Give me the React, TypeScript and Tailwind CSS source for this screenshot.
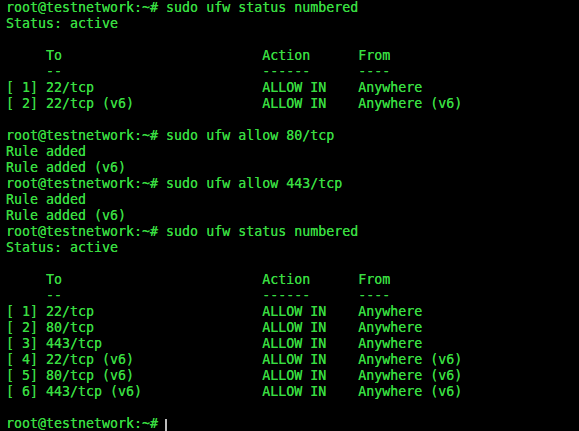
import React from "react";

const lines: string[] = [
  "root@testnetwork:~# sudo ufw status numbered",
  "Status: active",
  "",
  "     To                         Action      From",
  "     --                         ------      ----",
  "[ 1] 22/tcp                     ALLOW IN    Anywhere",
  "[ 2] 22/tcp (v6)                ALLOW IN    Anywhere (v6)",
  "",
  "root@testnetwork:~# sudo ufw allow 80/tcp",
  "Rule added",
  "Rule added (v6)",
  "root@testnetwork:~# sudo ufw allow 443/tcp",
  "Rule added",
  "Rule added (v6)",
  "root@testnetwork:~# sudo ufw status numbered",
  "Status: active",
  "",
  "     To                         Action      From",
  "     --                         ------      ----",
  "[ 1] 22/tcp                     ALLOW IN    Anywhere",
  "[ 2] 80/tcp                     ALLOW IN    Anywhere",
  "[ 3] 443/tcp                    ALLOW IN    Anywhere",
  "[ 4] 22/tcp (v6)                ALLOW IN    Anywhere (v6)",
  "[ 5] 80/tcp (v6)                ALLOW IN    Anywhere (v6)",
  "[ 6] 443/tcp (v6)               ALLOW IN    Anywhere (v6)",
  "",
];

export default function App() {
  return (
    <div className="w-[579px] h-[431px] overflow-hidden bg-black pl-[6px] text-[#38dc40] font-['DejaVu_Sans_Mono',monospace] text-[13.3px] leading-[16px] [text-shadow:0_0_0.5px_#38dc40]">
      {lines.map((l, i) => (
        <div key={i} className="h-[16px] whitespace-pre">
          {l}
        </div>
      ))}
      <div className="h-[16px] whitespace-pre flex items-center">
        <span>root@testnetwork:~# </span>
        <span className="ml-[-1px] w-[1.5px] h-[17px] mt-[6px] bg-[#bdbdbd]" />
      </div>
    </div>
  );
}
